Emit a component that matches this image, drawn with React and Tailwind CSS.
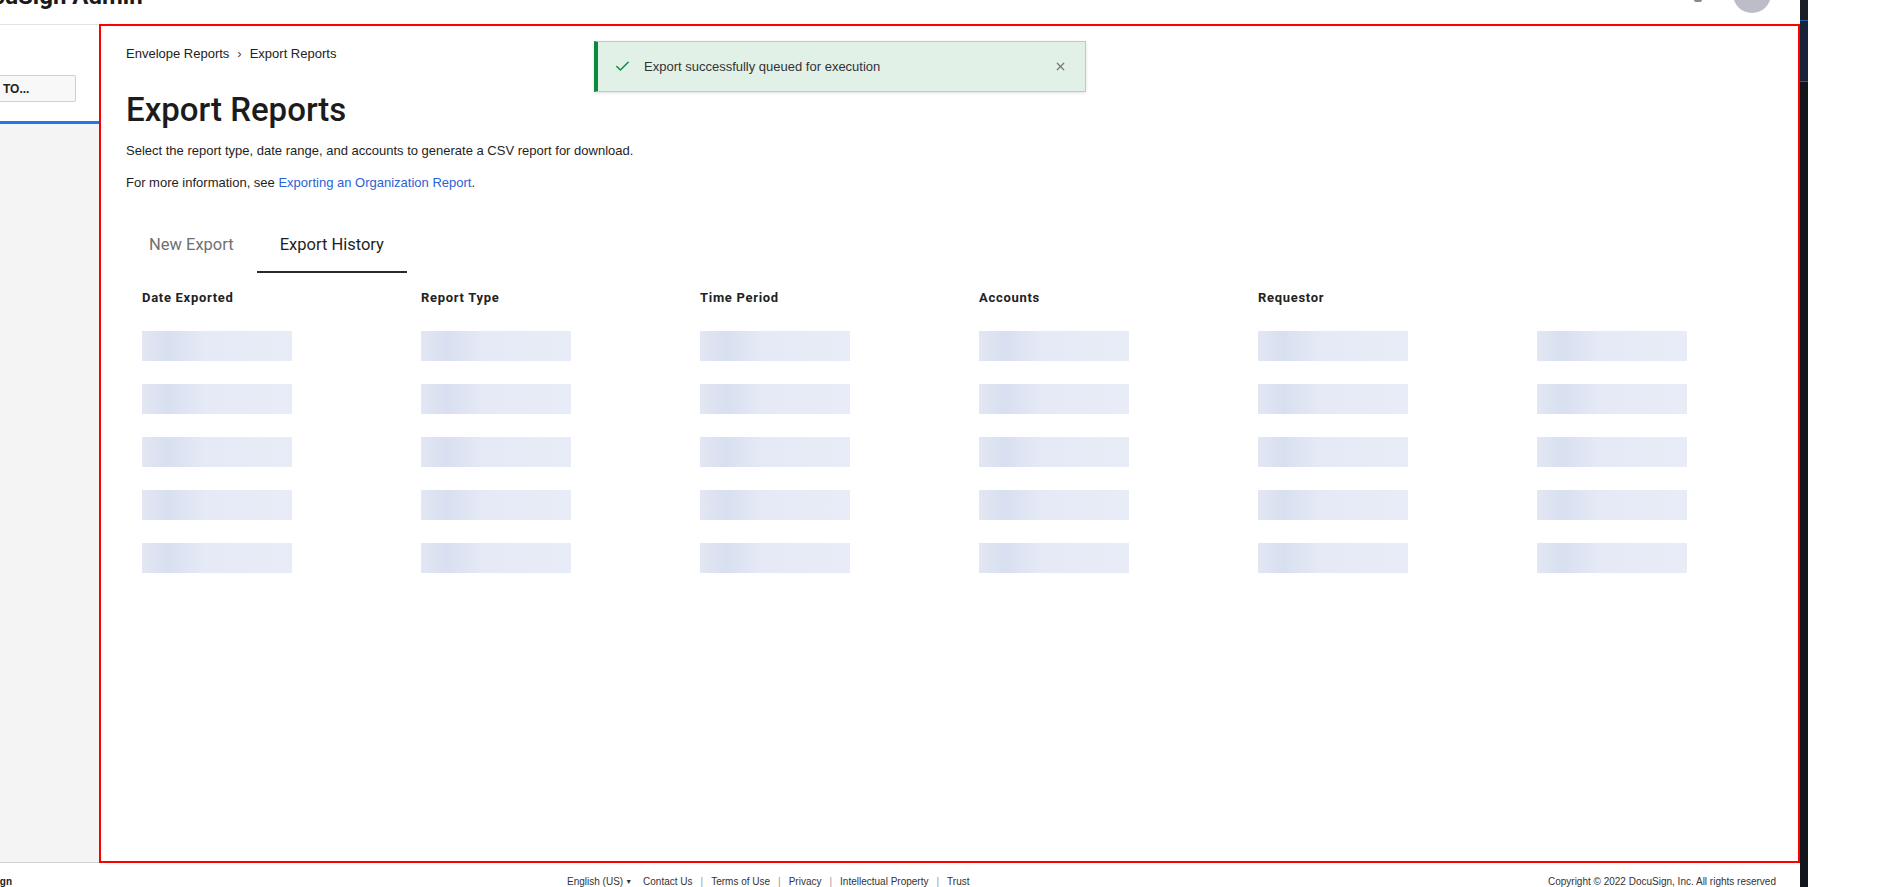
import { Check, X } from 'lucide-react'

const columns = ['Date Exported', 'Report Type', 'Time Period', 'Accounts', 'Requestor', '']
const rows = [0, 1, 2, 3, 4]

// barre de chargement (squelette) d'une cellule
function SkeletonBar() {
  return (
    <div className="w-[150px] h-[30px] bg-[linear-gradient(90deg,#e3e7f3_0%,#d8dff0_17%,#e6eaf6_42%,#e8ecf7_100%)]" />
  )
}

function Toast() {
  return (
    <div className="absolute left-[493px] top-[15px] w-[492px] h-[51px] flex items-center bg-[#e2f1e7] border border-[#a9d7b8] border-l-[4px] border-l-[#0b8a3d] shadow-[0_1px_3px_rgba(0,0,0,0.12)] pl-[16px] pr-[18px]">
      <Check size={17} strokeWidth={2.2} className="text-[#168c45]" />
      <span className="ml-[13px] text-[13px] text-[#333] font-['Liberation_Sans',Arial,sans-serif]">
        Export successfully queued for execution
      </span>
      <div className="flex-1" />
      <X size={13} strokeWidth={2.2} className="text-[#777]" />
    </div>
  )
}

function Tabs() {
  return (
    <div className="flex mt-[32px] font-['Roboto',sans-serif] text-[16.5px] leading-[20px]">
      <div className="px-[23px] pt-[12px] pb-[16px] border-b-2 border-transparent text-[#707070]">
        New Export
      </div>
      <div className="px-[23px] pt-[12px] pb-[16px] border-b-2 border-[#2a2a30] text-[#1f1f1f]">
        Export History
      </div>
    </div>
  )
}

function HistoryTable() {
  return (
    <div className="mt-[17px]">
      <div className="grid grid-cols-[repeat(5,279px)_1fr] h-[16px]">
        {columns.map((c, i) => (
          <div key={i} className="pl-[16px] font-['Roboto',sans-serif] font-bold text-[13px] leading-[16px] tracking-[0.7px] text-[#222]">
            {c}
          </div>
        ))}
      </div>
      <div className="flex flex-col gap-[23px] mt-[25px]">
        {rows.map((r) => (
          <div key={r} className="grid grid-cols-[repeat(5,279px)_1fr]">
            {columns.map((c, i) => (
              <div key={i} className="pl-[16px]">
                <SkeletonBar />
              </div>
            ))}
          </div>
        ))}
      </div>
    </div>
  )
}

export default function App() {
  return (
    <div className="flex w-[1900px] h-[887px] overflow-hidden bg-white font-['Liberation_Sans',Arial,sans-serif] text-[#1e1e1e]">
      <div className="w-[1800px] flex flex-col">
        {/* en-tête, en grande partie défilée hors de l'écran */}
        <header className="h-[24px] flex items-start overflow-hidden">
          <div className="-mt-[16px] -ml-[37px] font-['Roboto',sans-serif] font-bold text-[24px] leading-[24px] text-[#1a1a1a] whitespace-nowrap">
            DocuSign Admin
          </div>
          <div className="ml-auto mr-[29px] flex items-start">
            <div className="w-[8px] h-[2px] rounded-b bg-[#8a8a8a]" />
            <div className="ml-[31px] -mt-[25px] w-[38px] h-[38px] rounded-full bg-[#bdbdca]" />
          </div>
        </header>

        <div className="flex h-[839px]">
          <aside className="w-[99px] flex flex-col border-t border-b border-[#e4e4e4] border-b-[#d3d3d3]">
            <div className="h-[96px] bg-white pt-[50px]">
              <div className="w-[76px] h-[27px] flex items-center pl-[3px] bg-[#f8f8f8] border border-l-0 border-[#cfcfcf] rounded-r-[2px] text-[12px] font-bold text-[#222]">
                TO...
              </div>
            </div>
            <div className="h-[3px] bg-[#2276f0]" />
            <div className="flex-1 bg-[#f4f4f4]" />
          </aside>

          <main className="relative flex-1 border-2 border-[#ff0000] pl-[25px] pt-[20px]">
            <div className="flex items-center text-[13px] leading-[16px] text-[#222]">
              <span>Envelope Reports</span>
              <span className="mx-[8px] text-[#444]">›</span>
              <span>Export Reports</span>
            </div>

            <h1 className="mt-[28px] font-['Roboto',sans-serif] font-medium text-[33px] leading-[40px] text-[#1c1c1c]">
              Export Reports
            </h1>

            <p className="mt-[13px] text-[13px] leading-[16px]">
              Select the report type, date range, and accounts to generate a CSV report for download.
            </p>
            <p className="mt-[16px] text-[13px] leading-[16px]">
              For more information, see <span className="text-[#2a62d6]">Exporting an Organization Report</span>.
            </p>

            <Tabs />

            <HistoryTable />

            <Toast />
          </main>
        </div>

        <footer className="h-[24px] flex items-start pt-[13px] text-[10px] leading-[11px] text-[#333]">
          <div className="w-[12px] overflow-hidden flex justify-end">
            <span className="font-bold text-[#222] whitespace-nowrap">DocuSign</span>
          </div>
          <div className="ml-[555px] flex items-center whitespace-nowrap">
            <span>English (US)</span>
            <span className="ml-[2px] text-[7px]">▼</span>
            <span className="ml-[11px]">Contact Us</span>
            <span className="mx-[8px] text-[#999]">|</span>
            <span>Terms of Use</span>
            <span className="mx-[8px] text-[#999]">|</span>
            <span>Privacy</span>
            <span className="mx-[8px] text-[#999]">|</span>
            <span>Intellectual Property</span>
            <span className="mx-[8px] text-[#999]">|</span>
            <span>Trust</span>
          </div>
          <div className="ml-auto mr-[24px] whitespace-nowrap">Copyright © 2022 DocuSign, Inc. All rights reserved</div>
        </footer>
      </div>

      {/* bande sombre à droite */}
      <div className="w-[8px] h-full bg-[#12151b] flex flex-col">
        <div className="h-[20px] bg-[#1b1e25]" />
        <div className="h-[62px] bg-[#172338] border-y border-[#2c5aa0]" />
      </div>
      <div className="flex-1 bg-white" />
    </div>
  )
}
